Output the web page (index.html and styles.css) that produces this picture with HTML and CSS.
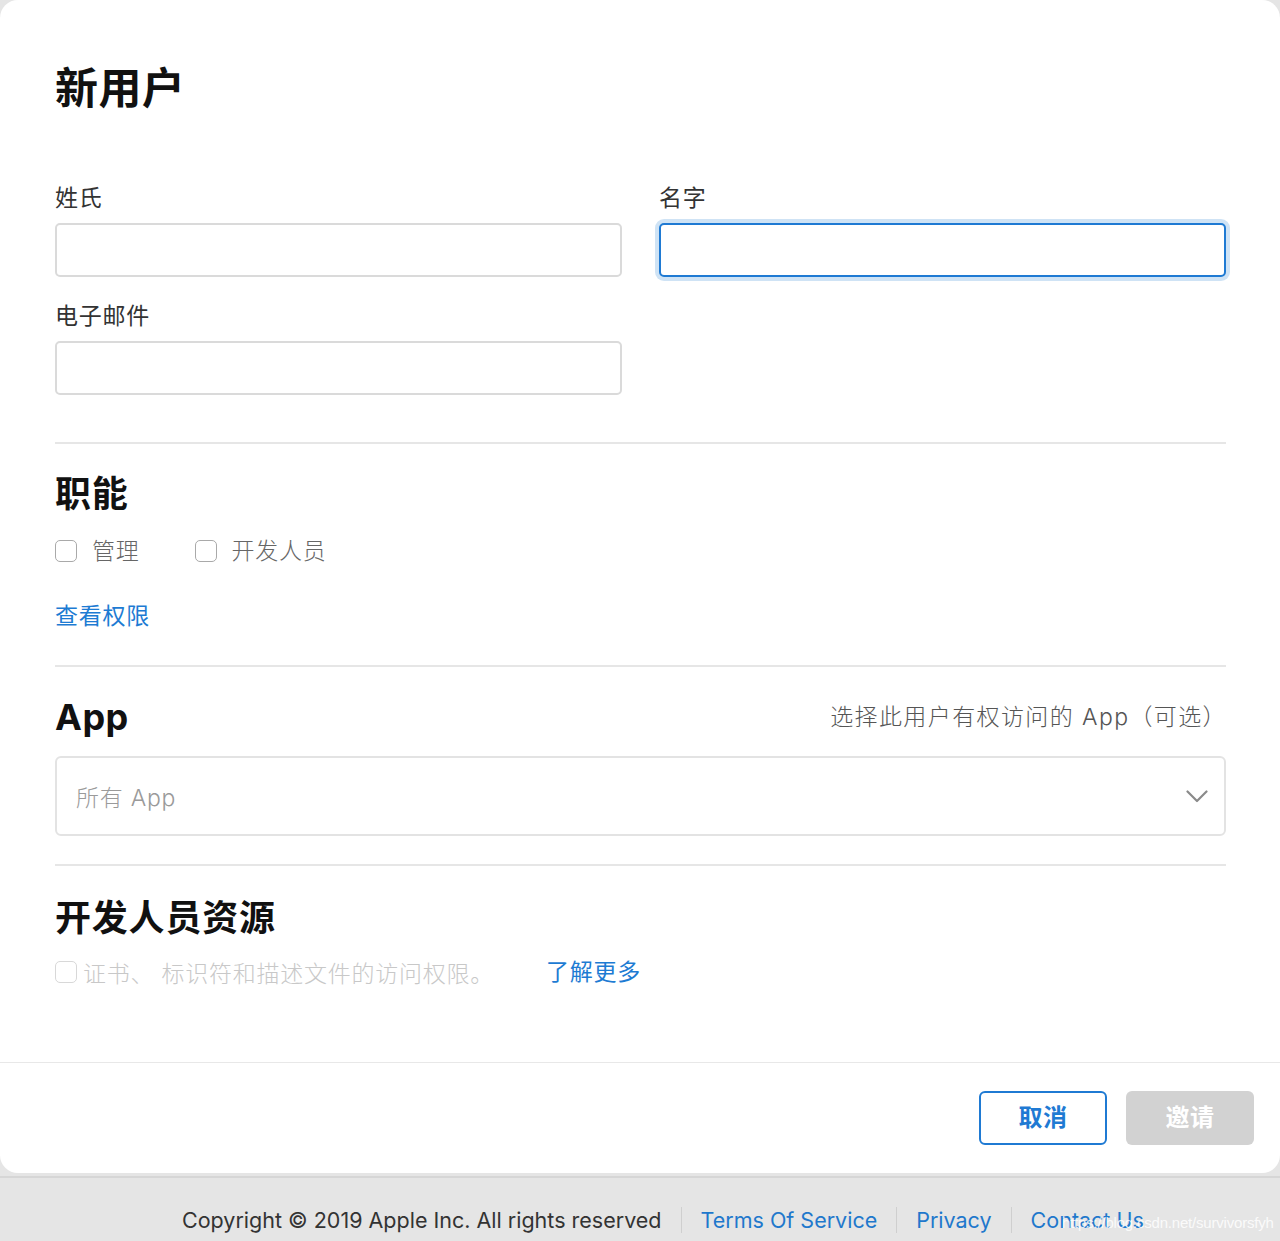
FILE: index.html
```html
<!DOCTYPE html>
<html lang="zh-CN">
<head>
<meta charset="utf-8">
<title>新用户</title>
<link rel="stylesheet" href="styles.css">
</head>
<body>
<div class="card">
  <div class="content">
    <h1 class="title">新用户</h1>
    <div class="grid">
      <div class="field">
        <label class="label">姓氏</label>
        <div class="input"></div>
      </div>
      <div class="field">
        <label class="label">名字</label>
        <div class="input focused"></div>
      </div>
      <div class="field">
        <label class="label">电子邮件</label>
        <div class="input"></div>
      </div>
    </div>
    <hr class="divider first">
    <h2 class="heading">职能</h2>
    <div class="checks">
      <span class="check"><span class="box"></span><span class="check-label">管理</span></span>
      <span class="check"><span class="box"></span><span class="check-label">开发人员</span></span>
    </div>
    <a class="link perm">查看权限</a>
    <hr class="divider">
    <div class="app-head">
      <h2 class="heading">App</h2>
      <span class="hint">选择此用户有权访问的 App（可选）</span>
    </div>
    <div class="select">
      <span class="placeholder">所有 App</span>
      <svg class="chev" width="22" height="13" viewBox="0 0 22 13"><polyline points="1.5,1.5 11,11 20.5,1.5" fill="none" stroke="#8a8a8a" stroke-width="2.2" stroke-linecap="round" stroke-linejoin="round"/></svg>
    </div>
    <hr class="divider after-select">
    <h2 class="heading res-head">开发人员资源</h2>
    <div class="res-row">
      <span class="box disabled"></span>
      <span class="res-text">证书、 标识符和描述文件的访问权限。</span>
      <a class="link more">了解更多</a>
    </div>
  </div>
  <div class="actions">
    <button class="btn cancel">取消</button>
    <button class="btn invite">邀请</button>
  </div>
</div>
<footer class="page-footer">
  <span class="copy">Copyright © 2019 Apple Inc. All rights reserved</span>
  <span class="sep"></span>
  <a class="flink">Terms Of Service</a>
  <span class="sep"></span>
  <a class="flink">Privacy</a>
  <span class="sep"></span>
  <a class="flink">Contact Us</a>
  <span class="watermark">https://blog.csdn.net/survivorsfyh</span>
</footer>
</body>
</html>
```
FILE: styles.css
```css
* { box-sizing: border-box; }
html, body { margin: 0; padding: 0; }
body {
  width: 1280px;
  height: 1241px;
  overflow: hidden;
  background: #e5e5e5;
  font-family: "Inter", "Noto Sans CJK SC", sans-serif;
  color: #1d1d1f;
}
.card {
  width: 1280px;
  height: 1173px;
  background: #fff;
  border-radius: 18px;
  display: flex;
  flex-direction: column;
}
.content {
  flex: 1;
  padding: 64px 54px 0 55px;
}
.title {
  margin: 0;
  font-size: 43px;
  letter-spacing: 0.4px;
  line-height: 48px;
  font-weight: 700;
  color: #111;
}
.grid {
  display: grid;
  grid-template-columns: 567px 567px;
  column-gap: 37px;
  row-gap: 24px;
  margin-top: 71px;
}
.label {
  display: block;
  font-size: 23px;
  letter-spacing: 0.75px;
  line-height: 30px;
  color: #333;
  margin-bottom: 10px;
}
.input {
  height: 54px;
  border: 2px solid #dadada;
  border-radius: 5px;
  background: #fff;
}
.input.focused {
  border-color: #1f7ad3;
  box-shadow: 0 0 0 4px #cfe3f5;
}
.divider {
  border: 0;
  height: 2px;
  background: #e6e6e6;
  margin: 29px 0 0;
}
.divider.first { margin-top: 47px; }
.divider.after-select { margin-top: 28px; }
.heading {
  margin: 30px 0 0;
  font-size: 36px;
  letter-spacing: 0.8px;
  line-height: 40px;
  font-weight: 700;
  color: #111;
}
.heading.res-head { margin-top: 32px; }
.checks {
  display: flex;
  gap: 55px;
  margin-top: 22px;
  height: 30px;
  align-items: center;
}
.check {
  display: flex;
  align-items: center;
  gap: 15px;
}
.box {
  width: 22px;
  height: 22px;
  border: 1.5px solid #a9a9a9;
  border-radius: 5px;
  background: #fff;
  flex: none;
}
.box.disabled { border-color: #d8d8d8; }
.check-label {
  font-size: 23px;
  letter-spacing: 0.75px;
  line-height: 30px;
  color: #666;
  font-weight: 300;
}
.link {
  color: #1d7bd3;
  font-size: 23px;
  letter-spacing: 0.75px;
  line-height: 30px;
  cursor: pointer;
}
.perm {
  display: block;
  margin-top: 35px;
  margin-bottom: 34px;
  width: max-content;
}
.app-head {
  display: flex;
  justify-content: space-between;
  align-items: center;
  margin-top: 30px;
}
.app-head .heading { margin: 0; letter-spacing: 0.5px; }
.hint {
  font-size: 23px;
  letter-spacing: 1.4px;
  line-height: 30px;
  color: #555;
  font-weight: 300;
  margin-right: -1px;
}
.select {
  margin-top: 19px;
  height: 80px;
  border: 2px solid #e3e3e3;
  border-radius: 6px;
  display: flex;
  align-items: center;
  justify-content: space-between;
  padding: 0 16px 0 19px;
}
.placeholder {
  font-size: 23px;
  letter-spacing: 0.75px;
  color: #9a9a9a;
  font-weight: 300;
}
.res-row {
  display: flex;
  align-items: center;
  margin-top: 19px;
  height: 30px;
}
.res-text {
  font-size: 23px;
  letter-spacing: 0.75px;
  color: #c8c8c8;
  font-weight: 300;
  margin-left: 6px;
}
.more { margin-left: 52px; }
.actions {
  border-top: 1.5px solid #e8e8e8;
  display: flex;
  justify-content: flex-end;
  gap: 19px;
  padding: 28px 26px 28px 0;
}
.btn {
  width: 128px;
  height: 54px;
  border-radius: 6px;
  font-family: "Noto Sans CJK SC", sans-serif;
  font-size: 24px;
  letter-spacing: 0.5px;
  line-height: 30px;
  font-weight: 700;
  padding: 0 0 4px;
}
.cancel {
  border: 2px solid #1f7ad3;
  background: #fff;
  color: #1f7ad3;
}
.invite {
  border: 0;
  background: #d2d2d2;
  color: #fff;
}
.page-footer {
  position: relative;
  margin-top: 3px;
  border-top: 2px solid #d6d6d6;
  display: flex;
  align-items: center;
  padding: 27px 0 0 182px;
  font-family: "Inter", "Liberation Sans", sans-serif;
  font-size: 21.5px;
  line-height: 30px;
}
.copy { color: #333; }
.flink { color: #1f78cc; }
.sep {
  width: 1px;
  height: 26px;
  background: #cfcfcf;
  margin: 0 19px;
}
.watermark {
  position: absolute;
  left: 1062px;
  top: 30px;
  font-family: "Liberation Sans", sans-serif;
  font-size: 15px;
  color: rgba(255,255,255,0.85);
  letter-spacing: -0.2px;
}
```
